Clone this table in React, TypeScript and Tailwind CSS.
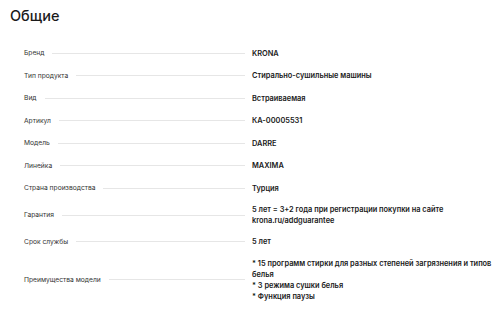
import React from "react";

const rows: { label: string; value: string[] }[] = [
  { label: "Бренд", value: ["KRONA"] },
  { label: "Тип продукта", value: ["Стирально-сушильные машины"] },
  { label: "Вид", value: ["Встраиваемая"] },
  { label: "Артикул", value: ["КА-00005531"] },
  { label: "Модель", value: ["DARRE"] },
  { label: "Линейка", value: ["MAXIMA"] },
  { label: "Страна производства", value: ["Турция"] },
  { label: "Гарантия", value: ["5 лет = 3+2 года при регистрации покупки на сайте krona.ru/addguarantee"] },
  { label: "Срок службы", value: ["5 лет"] },
  {
    label: "Преимущества модели",
    value: [
      "* 15 программ стирки для разных степеней загрязнения и типов белья",
      "* 3 режима сушки белья",
      "* Функция паузы",
    ],
  },
];

export default function App() {
  return (
    <div className="w-[500px] h-[313px] overflow-hidden bg-white" style={{ fontFamily: "Inter, 'Noto Sans', sans-serif" }}>
      <h2 className="pl-[10px] pt-[6px] text-[14.5px] leading-[20px] font-medium text-[#1a1a1a]">Общие</h2>
      <div className="mt-[16px] pl-[24px]">
        {rows.map((r) => (
          <div key={r.label} className="grid grid-cols-[221px_1fr] gap-x-[7px] min-h-[22.5px]">
            <div className="flex items-center">
              <span className="text-[6.7px] leading-[10px] text-[#333] whitespace-nowrap">{r.label}</span>
              <div className="flex-1 ml-[8px] h-px bg-[#e6e6e6]" />
            </div>
            <div className="py-[4.5px] text-[7.4px] leading-[11px] font-semibold text-[#1a1a1a] self-center">
              {r.value.map((v, i) => (
                <div key={i}>{v}</div>
              ))}
            </div>
          </div>
        ))}
      </div>
    </div>
  );
}
